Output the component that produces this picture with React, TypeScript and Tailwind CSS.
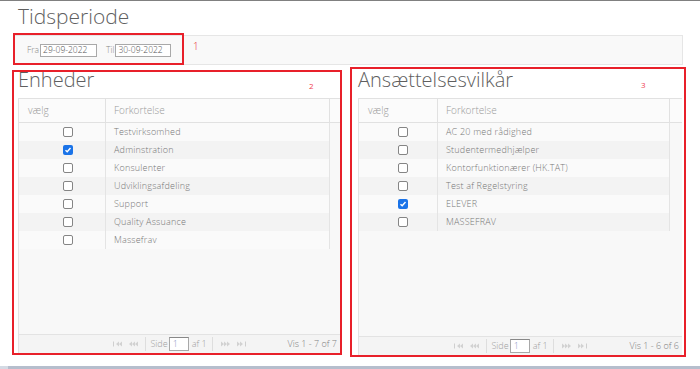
import React from "react";

type Row = { name: string; checked?: boolean };

const ENHEDER: Row[] = [
  { name: "Testvirksomhed" },
  { name: "Adminstration", checked: true },
  { name: "Konsulenter" },
  { name: "Udviklingsafdeling" },
  { name: "Support" },
  { name: "Quality Assuance" },
  { name: "Massefrav" },
];

const VILKAAR: Row[] = [
  { name: "AC 20 med rådighed" },
  { name: "Studentermedhjælper" },
  { name: "Kontorfunktionærer (HK.TAT)" },
  { name: "Test af Regelstyring" },
  { name: "ELEVER", checked: true },
  { name: "MASSEFRAV" },
];

function Check({ checked }: { checked?: boolean }) {
  if (checked) {
    return (
      <span className="flex h-[10px] w-[10px] items-center justify-center rounded-[2px] bg-[#1a73e8]">
        <svg width="8" height="8" viewBox="0 0 8 8">
          <path d="M1.5 4.2 L3.2 5.8 L6.5 2" fill="none" stroke="#fff" strokeWidth="1.4" />
        </svg>
      </span>
    );
  }
  return <span className="block h-[10px] w-[10px] rounded-[2px] border border-[#858585] bg-white" />;
}

function PagerIcon({ dir, edge }: { dir: "l" | "r"; edge?: boolean }) {
  const tri = dir === "l" ? "M4 3 L7 0.5 L7 5.5 Z M7 3 L10 0.5 L10 5.5 Z" : "M0 0.5 L3 3 L0 5.5 Z M3 0.5 L6 3 L3 5.5 Z";
  return (
    <span className="flex w-[16px] justify-center">
      <svg width="10" height="6" viewBox="0 0 10 6">
        {dir === "l" && edge && <rect x="1" y="0.5" width="1" height="5" fill="#cfcfcf" />}
        {dir === "l" && !edge && <path d="M1 3 L4 0.5 L4 5.5 Z" fill="#d2d2d2" />}
        <path d={tri} fill="#d2d2d2" />
        {dir === "r" && edge && <rect x="8" y="0.5" width="1" height="5" fill="#cfcfcf" />}
        {dir === "r" && !edge && <path d="M6 0.5 L9 3 L6 5.5 Z" fill="#d2d2d2" />}
      </svg>
    </span>
  );
}

function Grid({
  rows,
  col1,
  col2,
  cbPad,
  total,
}: {
  rows: Row[];
  col1: string;
  col2: string;
  cbPad: string;
  total: string;
}) {
  return (
    <div className="flex flex-1 flex-col border-l border-[#e3e3e3]">
      <div className="flex h-[25px] border-y border-[#e1e1e1] bg-[#fbfbfb] text-[10px] font-light text-[#9a9a9a]">
        <div className={`${col1} flex items-center border-r border-[#e1e1e1] pl-[9px]`}>vælg</div>
        <div className={`${col2} flex items-center border-r border-[#e1e1e1] pl-[8px]`}>Forkortelse</div>
        <div className="flex-1" />
      </div>
      {rows.map((r, i) => (
        <div
          key={r.name}
          className={`flex h-[18px] text-[9px] font-light text-[#777] ${i % 2 === 1 ? "bg-[#f3f3f3]" : "bg-[#fafafa]"}`}
        >
          <div className={`${col1} ${cbPad} flex items-center border-r border-[#e4e4e4]`}>
            <Check checked={r.checked} />
          </div>
          <div className={`${col2} flex items-center border-r border-[#e4e4e4] pl-[8px] tracking-[0.2px]`}>
            {r.name}
          </div>
          <div className="flex-1 bg-[#f8f8f8]" />
        </div>
      ))}
      <div className="flex-1 bg-[#f8f8f8]" />
      <div className="grid h-[19px] grid-cols-[1fr_auto_1fr] items-center border-t border-[#e3e3e3] bg-[#f4f4f4] text-[9px] font-light text-[#a0a0a0]">
        <div />
        <div className="flex items-center">
          <PagerIcon dir="l" edge />
          <PagerIcon dir="l" />
          <span className="mx-[4px] h-[14px] w-px bg-[#dedede]" />
          <span className="mr-[1px]">Side</span>
          <span className="flex h-[14px] w-[20px] items-center border border-[#a8a8a8] border-t-[#888] bg-white pl-[3px] text-[#8b9bc4]">
            1
          </span>
          <span className="ml-[3px]">af 1</span>
          <span className="mx-[5px] h-[14px] w-px bg-[#dedede]" />
          <PagerIcon dir="r" />
          <PagerIcon dir="r" edge />
        </div>
        <div className="flex justify-end pr-[3px] text-[#808080]">{total}</div>
      </div>
    </div>
  );
}

export default function App() {
  return (
    <div className="relative h-[369px] w-[700px] overflow-hidden border-t border-[#808080] bg-white font-['Open_Sans',sans-serif]">
      <div className="mt-[4px] pl-[18px] text-[21px] font-light leading-[22px] text-[#5f5f5f]">Tidsperiode</div>

      <div className="relative ml-[13px] mt-[8px] flex h-[30px] w-[670px] items-center border border-[#e6e6e6] bg-[#f9f9f9] pl-[13px] text-[8.5px] font-light">
        <span className="mr-[1px] text-[#888]">Fra</span>
        <span className="flex h-[13px] w-[57px] items-center border border-[#a9a9a9] bg-white pl-[2px] text-[#555]">
          29-09-2022
        </span>
        <span className="ml-[9px] mr-[1px] text-[#888]">Til</span>
        <span className="flex h-[13px] w-[56px] items-center border border-[#a9a9a9] bg-white pl-[2px] text-[#555]">
          30-09-2022
        </span>
        <div className="absolute left-[-1px] top-[-3px] h-[32px] w-[171px] border-2 border-[#e8202a]" />
        <span className="absolute left-[179px] top-[3px] text-[10px] text-[#e8202a]">1</span>
      </div>

      <div className="mt-[2px] flex items-start gap-[8px] pl-[12px]">
        <div className="relative mt-[3px] flex h-[285px] w-[330px] flex-col border-2 border-[#e8202a] pl-[4px]">
          <div className="h-[16px] text-[20px] font-light leading-[16px] text-[#5f5f5f]">Enheder</div>
          <span className="absolute left-[295px] top-[8px] text-[8px] text-[#f04050]">2</span>
          <div className="mt-[10px] flex flex-1 flex-col">
            <Grid rows={ENHEDER} col1="w-[87px]" col2="w-[224px]" cbPad="pl-[44px]" total="Vis 1 - 7 of 7" />
          </div>
        </div>

        <div className="relative flex h-[290px] w-[336px] flex-col border-2 border-[#e8202a] pl-[6px] pr-[2px]">
          <div className="mt-[3px] h-[16px] text-[20px] font-light leading-[16px] text-[#5f5f5f]">Ansættelsesvilkår</div>
          <span className="absolute left-[289px] top-[10px] text-[8px] text-[#f04050]">3</span>
          <div className="mt-[10px] flex flex-1 flex-col">
            <Grid rows={VILKAAR} col1="w-[79px]" col2="w-[232px]" cbPad="pl-[39px]" total="Vis 1 - 6 of 6" />
          </div>
        </div>
      </div>

      <div className="mt-[9px] flex h-[3px]">
        <div className="w-[8px] bg-[#d4dae4]" />
        <div className="flex-1 bg-[#b6becd]" />
      </div>
    </div>
  );
}
